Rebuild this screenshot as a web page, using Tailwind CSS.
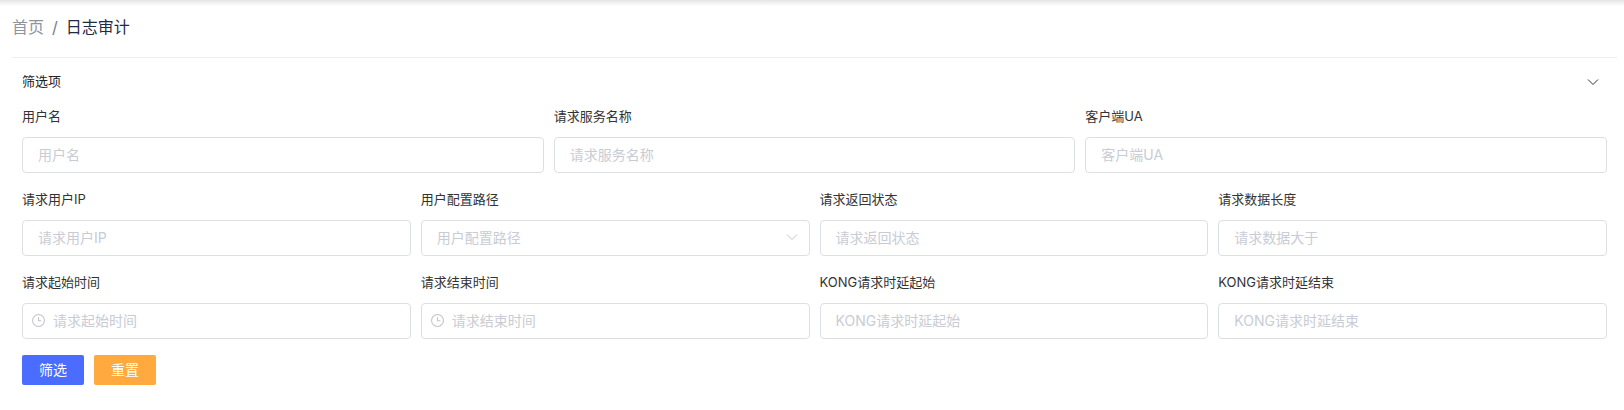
<!DOCTYPE html>
<html>

<head>
  <title>日志审计</title>
  <script src="https://cdn.jsdelivr.net/npm/@tailwindcss/browser@4"></script>
</head>

<body class="bg-white font-['Inter','Noto_Sans_CJK_SC',sans-serif]">
  <div class="h-[410px] overflow-hidden">
    <!-- top shadow -->
    <div class="h-[6px] bg-gradient-to-b from-[#e4e4e6] to-white"></div>

    <!-- breadcrumb -->
    <div class="ml-3 mr-[7px] h-[52px] border-b border-[#ebeef5]">
      <div class="flex items-center h-[42px] text-base text-[#8f939f]">
        <span>首页</span>
        <span class="mx-[8px] text-[#777c89]">/</span>
        <span class="text-[#1f2a44]">日志审计</span>
      </div>
    </div>

    <div class="pl-[22px] pr-[17px]">
      <!-- filter header -->
      <div class="flex items-center justify-between h-[48px] text-[13px] text-[#222]">
        <span>筛选项</span>
        <svg class="w-3 h-3 mr-[8px] text-[#303133]" viewBox="0 0 12 12" fill="none" stroke="currentColor" stroke-width="1"><path d="M1 3.5l5 5 5-5" /></svg>
      </div>

      <!-- row 1 -->
      <div class="grid grid-cols-3 gap-x-[10px] mt-[-1px]">
        <div>
          <div class="h-[23px] text-[13px] leading-[23px] text-[#333]">用户名</div>
          <input placeholder="用户名" class="mt-[9px] w-full h-[36px] px-[15px] pb-[2px] text-sm border border-[#dcdfe6] rounded placeholder:text-[#c9ccd4]" />
        </div>
        <div>
          <div class="h-[23px] text-[13px] leading-[23px] text-[#333]">请求服务名称</div>
          <input placeholder="请求服务名称" class="mt-[9px] w-full h-[36px] px-[15px] pb-[2px] text-sm border border-[#dcdfe6] rounded placeholder:text-[#c9ccd4]" />
        </div>
        <div>
          <div class="h-[23px] text-[13px] leading-[23px] text-[#333]">客户端UA</div>
          <input placeholder="客户端UA" class="mt-[9px] w-full h-[36px] px-[15px] pb-[2px] text-sm border border-[#dcdfe6] rounded placeholder:text-[#c9ccd4]" />
        </div>
      </div>

      <!-- row 2 -->
      <div class="grid grid-cols-4 gap-x-[10px] mt-[15px]">
        <div>
          <div class="h-[23px] text-[13px] leading-[23px] text-[#333]">请求用户IP</div>
          <input placeholder="请求用户IP" class="mt-[9px] w-full h-[36px] px-[15px] pb-[2px] text-sm border border-[#dcdfe6] rounded placeholder:text-[#c9ccd4]" />
        </div>
        <div>
          <div class="h-[23px] text-[13px] leading-[23px] text-[#333]">用户配置路径</div>
          <div class="relative mt-[9px]">
            <input placeholder="用户配置路径" class="w-full h-[36px] px-[15px] pb-[2px] text-sm border border-[#dcdfe6] rounded placeholder:text-[#c9ccd4]" />
            <svg class="absolute right-[12px] top-[11px] w-3 h-3 text-[#c0c4cc]" viewBox="0 0 12 12" fill="none" stroke="currentColor" stroke-width="1"><path d="M1 3.5l5 5 5-5" /></svg>
          </div>
        </div>
        <div>
          <div class="h-[23px] text-[13px] leading-[23px] text-[#333]">请求返回状态</div>
          <input placeholder="请求返回状态" class="mt-[9px] w-full h-[36px] px-[15px] pb-[2px] text-sm border border-[#dcdfe6] rounded placeholder:text-[#c9ccd4]" />
        </div>
        <div>
          <div class="h-[23px] text-[13px] leading-[23px] text-[#333]">请求数据长度</div>
          <input placeholder="请求数据大于" class="mt-[9px] w-full h-[36px] px-[15px] pb-[2px] text-sm border border-[#dcdfe6] rounded placeholder:text-[#c9ccd4]" />
        </div>
      </div>

      <!-- row 3 -->
      <div class="grid grid-cols-4 gap-x-[10px] mt-[15px]">
        <div>
          <div class="h-[23px] text-[13px] leading-[23px] text-[#333]">请求起始时间</div>
          <div class="relative mt-[9px]">
            <input placeholder="请求起始时间" class="w-full h-[36px] pl-[30px] pr-[15px] pb-[2px] text-sm border border-[#dcdfe6] rounded placeholder:text-[#c9ccd4]" />
            <svg class="absolute left-[10px] top-[11px] w-[13px] h-[13px] text-[#c0c4cc]" viewBox="0 0 12 12" fill="none" stroke="currentColor" stroke-width="1"><circle cx="6" cy="6" r="5.5" /><path d="M6 3v3.2h2.6" /></svg>
          </div>
        </div>
        <div>
          <div class="h-[23px] text-[13px] leading-[23px] text-[#333]">请求结束时间</div>
          <div class="relative mt-[9px]">
            <input placeholder="请求结束时间" class="w-full h-[36px] pl-[30px] pr-[15px] pb-[2px] text-sm border border-[#dcdfe6] rounded placeholder:text-[#c9ccd4]" />
            <svg class="absolute left-[10px] top-[11px] w-[13px] h-[13px] text-[#c0c4cc]" viewBox="0 0 12 12" fill="none" stroke="currentColor" stroke-width="1"><circle cx="6" cy="6" r="5.5" /><path d="M6 3v3.2h2.6" /></svg>
          </div>
        </div>
        <div>
          <div class="h-[23px] text-[13px] leading-[23px] text-[#333]">KONG请求时延起始</div>
          <input placeholder="KONG请求时延起始" class="mt-[9px] w-full h-[36px] px-[15px] pb-[2px] text-sm border border-[#dcdfe6] rounded placeholder:text-[#c9ccd4]" />
        </div>
        <div>
          <div class="h-[23px] text-[13px] leading-[23px] text-[#333]">KONG请求时延结束</div>
          <input placeholder="KONG请求时延结束" class="mt-[9px] w-full h-[36px] px-[15px] pb-[2px] text-sm border border-[#dcdfe6] rounded placeholder:text-[#c9ccd4]" />
        </div>
      </div>

      <!-- buttons -->
      <div class="flex gap-[10px] mt-[16px]">
        <button type="button" class="w-[62px] h-[30px] text-sm text-white bg-[#4a6cff] rounded-[2px]">筛选</button>
        <button type="button" class="w-[62px] h-[30px] text-sm text-white bg-[#ffa93e] rounded-[2px]">重置</button>
      </div>
    </div>
  </div>
</body>

</html>
